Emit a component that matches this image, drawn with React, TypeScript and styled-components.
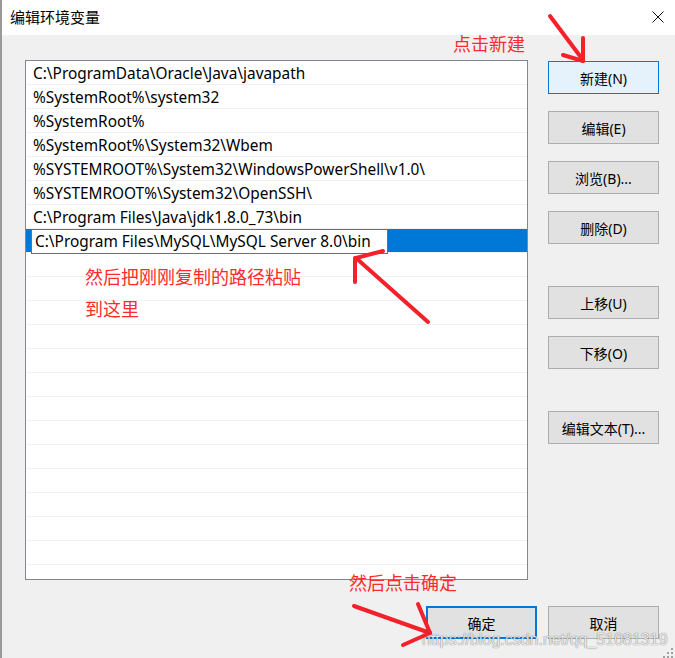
import React from "react";
import styled, { createGlobalStyle } from "styled-components";

const GlobalStyle = createGlobalStyle`
  html, body {
    margin: 0;
    padding: 0;
    background: #f0f0f0;
  }
  * {
    box-sizing: border-box;
  }
`;

const CJK = `"Noto Sans", "Noto Sans CJK SC", sans-serif`;

const Window = styled.div`
  position: relative;
  width: 675px;
  height: 658px;
  display: flex;
  flex-direction: column;
  background: #f0f0f0;
  border-left: 2px solid #9a9a9a;
  overflow: hidden;
  font-family: ${CJK};
`;

const TitleBar = styled.div`
  height: 35px;
  flex-shrink: 0;
  background: #fff;
  display: flex;
  align-items: center;
  justify-content: space-between;
  padding: 0 11px 2px 8px;
`;

const Title = styled.span`
  font-size: 15px;
  color: #000;
`;

const CloseIcon = styled.svg`
  width: 12px;
  height: 12px;
  margin-top: 1px;
`;

const Body = styled.div`
  flex: 1;
  display: flex;
  flex-direction: column;
  padding: 25px 16px 0 23px;
`;

const Main = styled.div`
  display: flex;
  gap: 20px;
`;

const List = styled.div`
  width: 503px;
  height: 520px;
  background: #fff;
  border: 1px solid #828790;
  overflow: hidden;
`;

const Row = styled.div<{ $selected?: boolean }>`
  height: 24px;
  display: flex;
  align-items: stretch;
  border-bottom: 1px solid #f0f0f0;
  padding-left: ${(p) => (p.$selected ? "5px" : "7px")};
  background: ${(p) => (p.$selected ? "#0078d7" : "#fff")};
  font-size: 15.4px;
  color: #000;
  line-height: 25px;
  white-space: nowrap;
`;

const EditBox = styled.div`
  background: #fff;
  border: 1px solid #6e6e6e;
  padding: 0 0 0 3px;
  width: 357px;
  height: 25px;
  line-height: 23px;
`;

const ButtonColumn = styled.div`
  display: flex;
  flex-direction: column;
  padding-top: 1px;
`;

const Button = styled.div<{ $primary?: boolean; $default?: boolean; $gap?: number }>`
  width: 111px;
  height: 33px;
  margin-top: ${(p) => p.$gap ?? 0}px;
  display: flex;
  align-items: center;
  justify-content: center;
  font-size: 14px;
  color: #000;
  background: ${(p) => (p.$primary ? "#e5f1fb" : "#e1e1e1")};
  border: ${(p) =>
    p.$default ? "2px solid #0078d7" : p.$primary ? "1px solid #0078d7" : "1px solid #adadad"};
`;

const Footer = styled.div`
  display: flex;
  justify-content: flex-end;
  gap: 11px;
  padding-top: 26px;
`;

const Note = styled.span<{ $x: number; $y: number }>`
  position: absolute;
  left: ${(p) => p.$x}px;
  top: ${(p) => p.$y}px;
  font-family: "Noto Sans CJK SC", sans-serif;
  font-size: 18px;
  line-height: 20px;
  color: #ff2b2b;
  white-space: nowrap;
`;

const Watermark = styled.span`
  position: absolute;
  left: 420px;
  top: 630px;
  font-family: "Liberation Sans", Arial, sans-serif;
  font-size: 16px;
  line-height: 20px;
  color: rgba(255, 255, 255, 0.85);
  text-shadow: 0 0 1px rgba(0, 0, 0, 0.45), 0 0 1px rgba(0, 0, 0, 0.3);
  white-space: nowrap;
`;

const Overlay = styled.svg`
  position: absolute;
  left: -2px;
  top: 0;
  pointer-events: none;
`;

const paths = [
  "C:\\ProgramData\\Oracle\\Java\\javapath",
  "%SystemRoot%\\system32",
  "%SystemRoot%",
  "%SystemRoot%\\System32\\Wbem",
  "%SYSTEMROOT%\\System32\\WindowsPowerShell\\v1.0\\",
  "%SYSTEMROOT%\\System32\\OpenSSH\\",
  "C:\\Program Files\\Java\\jdk1.8.0_73\\bin",
];

const sideButtons = [
  { label: "新建(N)", gap: 0, primary: true },
  { label: "编辑(E)", gap: 17 },
  { label: "浏览(B)...", gap: 17 },
  { label: "删除(D)", gap: 17 },
  { label: "上移(U)", gap: 42 },
  { label: "下移(O)", gap: 17 },
  { label: "编辑文本(T)...", gap: 42 },
];

const red = "#f4202a";

export default function App() {
  const empty = Array.from({ length: 14 });
  return (
    <>
      <GlobalStyle />
      <Window>
        <TitleBar>
          <Title>编辑环境变量</Title>
          <CloseIcon viewBox="0 0 12 12">
            <path d="M0.5 0.5 L11.5 11.5 M11.5 0.5 L0.5 11.5" stroke="#111" strokeWidth="1" />
          </CloseIcon>
        </TitleBar>
        <Body>
          <Main>
            <List>
              {paths.map((p) => (
                <Row key={p}>{p}</Row>
              ))}
              <Row $selected>
                <EditBox>C:\Program Files\MySQL\MySQL Server 8.0\bin</EditBox>
              </Row>
              {empty.map((_, i) => (
                <Row key={i} />
              ))}
            </List>
            <ButtonColumn>
              {sideButtons.map((b) => (
                <Button key={b.label} $primary={b.primary} $gap={b.gap}>
                  {b.label}
                </Button>
              ))}
            </ButtonColumn>
          </Main>
          <Footer>
            <Button $default>确定</Button>
            <Button>取消</Button>
          </Footer>
        </Body>

        <Note $x={451} $y={33}>点击新建</Note>
        <Note $x={83} $y={266}>然后把刚刚复制的路径粘贴</Note>
        <Note $x={83} $y={298}>到这里</Note>
        <Note $x={347} $y={572}>然后点击确定</Note>
        <Watermark>https://blog.csdn.net/qq_51081319</Watermark>

        <Overlay width="675" height="658" viewBox="0 0 675 658">
          <g stroke={red} strokeWidth="4" strokeLinecap="round" fill="none">
            <path d="M550 16 L583 60" />
            <path d="M583 38 L583 61" />
            <path d="M563 55 L583 61" />
            <path d="M428 322 L356 258" />
            <path d="M356 258 L383 251" />
            <path d="M355 258 L355 282" />
            <path d="M354 606 L430 633" />
            <path d="M418 604 L430 633" />
            <path d="M403 645 L430 633" />
          </g>
          <g fill="#a0a0a0">
            <rect x="671" y="648" width="2" height="2" />
            <rect x="667" y="652" width="2" height="2" />
            <rect x="671" y="652" width="2" height="2" />
            <rect x="663" y="656" width="2" height="2" />
            <rect x="667" y="656" width="2" height="2" />
            <rect x="671" y="656" width="2" height="2" />
          </g>
        </Overlay>
      </Window>
    </>
  );
}
